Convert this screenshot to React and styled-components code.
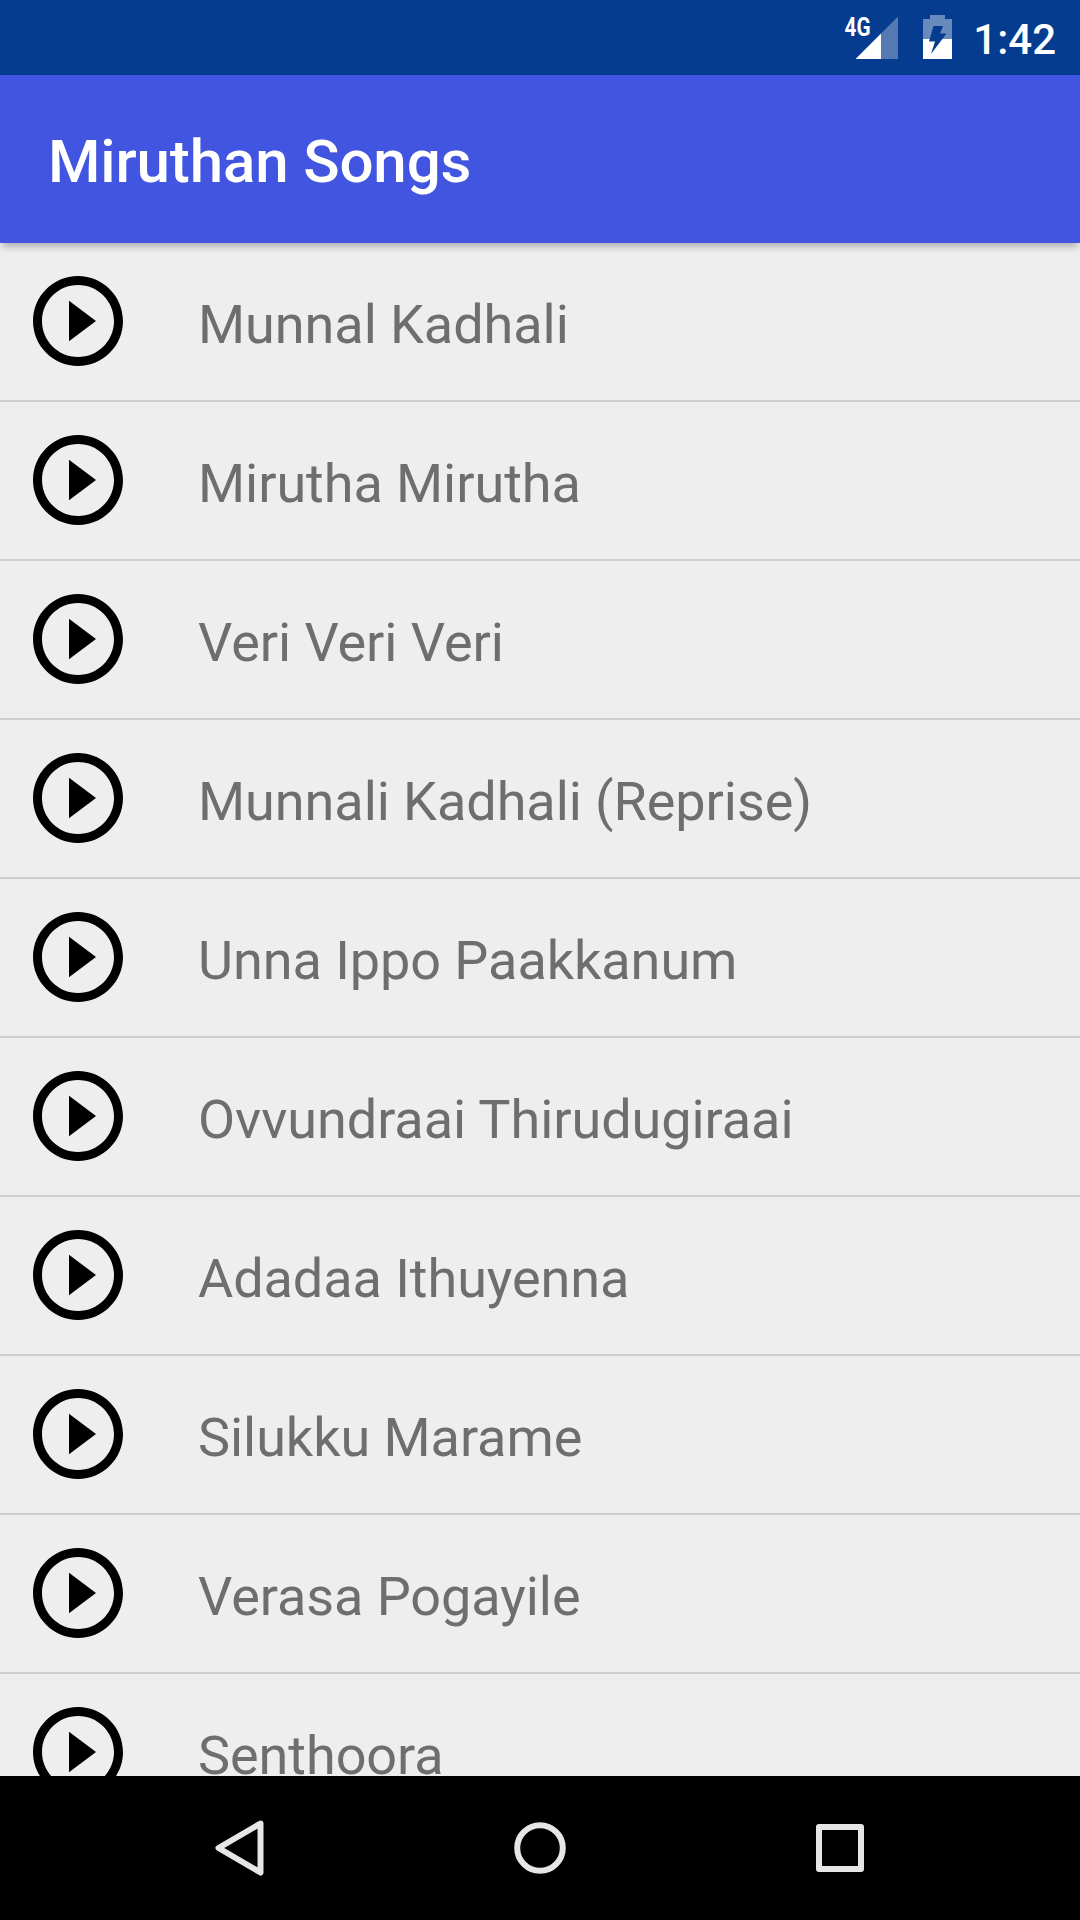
import React from "react";
import styled, { createGlobalStyle } from "styled-components";

const GlobalStyle = createGlobalStyle`
  body {
    margin: 0;
    font-family: Roboto, sans-serif;
  }
`;

const Screen = styled.div`
  display: flex;
  flex-direction: column;
  width: 1080px;
  height: 1920px;
  overflow: hidden;
  background: #eeeeee;
`;

const StatusBar = styled.div`
  flex: none;
  display: flex;
  justify-content: flex-end;
  height: 75px;
  padding-right: 24px;
  box-sizing: border-box;
  background: #053c8f;
  color: #ffffff;
`;

const StatusIcon = styled.svg`
  flex: none;
  width: ${(props) => props.$width}px;
  height: 75px;
  margin-right: ${(props) => props.$gap}px;

  text {
    font-family: Roboto, sans-serif;
    font-size: 25.5px;
    font-weight: 700;
  }
`;

const Clock = styled.span`
  font-size: 42px;
  font-weight: 500;
  line-height: 80px;
`;

const AppBar = styled.header`
  flex: none;
  display: flex;
  align-items: center;
  height: 168px;
  padding: 5px 48px 0;
  box-sizing: border-box;
  background: #4155e0;
  box-shadow: 0 6px 7px -2px rgba(0, 0, 0, 0.25);
  z-index: 1;
`;

const Title = styled.h1`
  margin: 0;
  color: #ffffff;
  font-size: 60px;
  font-weight: 500;
  letter-spacing: -0.12px;
  line-height: 70px;
`;

const SongList = styled.ul`
  flex: 1;
  min-height: 0;
  margin: 0;
  padding: 0;
  overflow: hidden;
  list-style: none;
`;

const SongRow = styled.li`
  display: flex;
  height: 159px;
  padding: 24px 24px 0;
  box-sizing: border-box;
  border-bottom: 2px solid #cecece;
`;

const PlayIcon = styled.svg`
  flex: none;
  width: 108px;
  height: 108px;
`;

const SongName = styled.span`
  margin-left: 66px;
  color: #6e6e6e;
  font-size: 54px;
  letter-spacing: -0.06px;
  line-height: 116px;
  white-space: nowrap;
`;

const NavBar = styled.nav`
  flex: none;
  display: flex;
  justify-content: center;
  height: 144px;
  background: #000000;
`;

const NavButton = styled.div`
  display: flex;
  align-items: center;
  justify-content: center;
  width: 300px;

  svg {
    width: 72px;
    height: 72px;
    fill: none;
    stroke: #e6e6e6;
    stroke-width: 6;
  }
`;

const songs = [
  "Munnal Kadhali",
  "Mirutha Mirutha",
  "Veri Veri Veri",
  "Munnali Kadhali (Reprise)",
  "Unna Ippo Paakkanum",
  "Ovvundraai Thirudugiraai",
  "Adadaa Ithuyenna",
  "Silukku Marame",
  "Verasa Pogayile",
  "Senthoora",
];

function Signal() {
  return (
    <StatusIcon $width={54} $gap={25} viewBox="0 0 54 75" fill="#ffffff">
      <text x="0.5" y="35.5" textLength="26" lengthAdjust="spacingAndGlyphs">
        4G
      </text>
      <path d="M37 33.5L54 16.5V59H37z" opacity="0.32" />
      <path d="M11.5 59L37 33.5V59z" />
    </StatusIcon>
  );
}

function Battery() {
  return (
    <StatusIcon $width={29} $gap={21} viewBox="0 0 29 75" fill="#ffffff">
      <path d="M7 15h15v4h7v20H0V19h7z" opacity="0.4" />
      <path d="M0 39h29v20H0z" />
      <path d="M10.5 26H20L17 33.5H23.5L8 54L12 41.5H6z" fill="#053c8f" />
    </StatusIcon>
  );
}

function Song({ name }) {
  return (
    <SongRow>
      <PlayIcon viewBox="0 0 24 24">
        <path d="M10 16.5l6-4.5-6-4.5v9zM12 2C6.48 2 2 6.48 2 12s4.48 10 10 10 10-4.48 10-10S17.52 2 12 2zm0 18c-4.41 0-8-3.59-8-8s3.59-8 8-8 8 3.59 8 8-3.59 8-8 8z" />
      </PlayIcon>
      <SongName>{name}</SongName>
    </SongRow>
  );
}

function App() {
  return (
    <>
      <GlobalStyle />
      <Screen>
        <StatusBar>
          <Signal />
          <Battery />
          <Clock>1:42</Clock>
        </StatusBar>
        <AppBar>
          <Title>Miruthan Songs</Title>
        </AppBar>
        <SongList>
          {songs.map((name) => (
            <Song key={name} name={name} />
          ))}
        </SongList>
        <NavBar>
          <NavButton>
            <svg viewBox="0 0 72 72">
              <path d="M56.5 11.5L14.5 36L56.5 60.5z" strokeLinejoin="round" />
            </svg>
          </NavButton>
          <NavButton>
            <svg viewBox="0 0 72 72">
              <circle cx="36" cy="36" r="22.8" />
            </svg>
          </NavButton>
          <NavButton>
            <svg viewBox="0 0 72 72">
              <path d="M15 15h42v42H15z" strokeLinejoin="round" />
            </svg>
          </NavButton>
        </NavBar>
      </Screen>
    </>
  );
}

export default App;
